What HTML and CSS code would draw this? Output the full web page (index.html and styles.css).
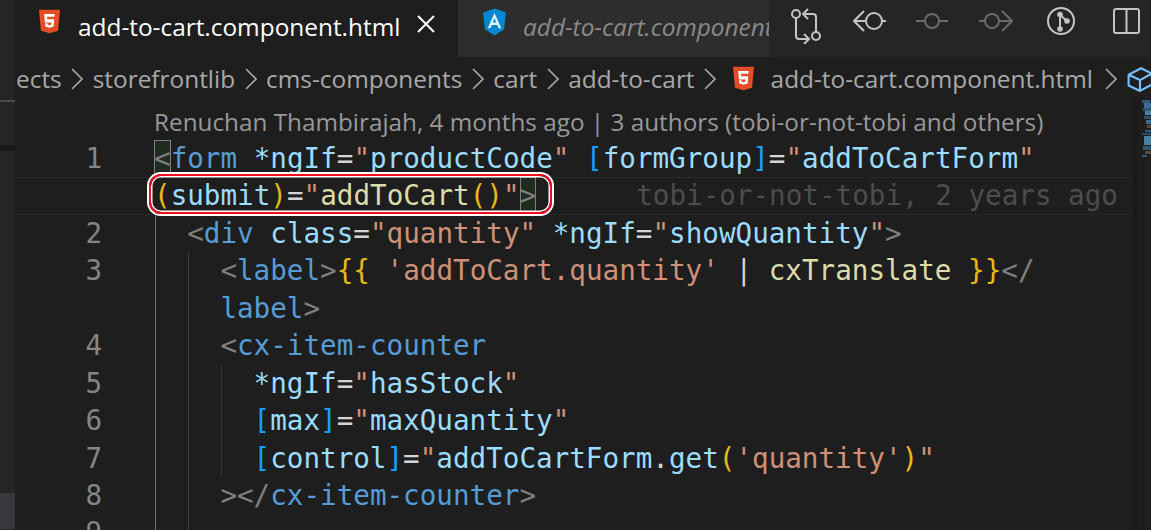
FILE: index.html
```html
<!DOCTYPE html>
<html lang="en">
<head>
<meta charset="utf-8">
<title>add-to-cart.component.html</title>
<link rel="stylesheet" href="styles.css">
</head>
<body>
<div class="app">
  <aside class="strip">
    <div class="strip-line"></div>
    <div class="strip-dark"></div>
    <div class="strip-sel"></div>
  </aside>
  <main class="main">
    <header class="tabbar">
      <div class="tab tab-active">
        <svg class="ico-html" viewBox="0 0 24 27"><path fill="#e44d26" d="M0 0h24l-2.2 24L12 27l-9.8-3z"/><path fill="#fff" d="M6 5h12l-.3 3H9.2l.2 3h8l-.7 8.200L12 20.600l-4.700-1.400-.3-3.700h2.800l.2 1.800 2 .5 2-.5.300-2.700H6.700z"/></svg>
        <span class="tab-name">add-to-cart.component.html</span>
        <svg class="ico-close" viewBox="0 0 20 20"><path d="M2 2l16 16M18 2L2 18"/></svg>
      </div>
      <div class="tab tab-inactive">
        <svg class="ico-ng" viewBox="0 0 24 28"><path fill="#0288d1" d="M12 0l12 4.200-2 17.300L12 28 2 21.500 0 4.200z"/><path fill="#e6f3fa" d="M12 4.500L5 20.500h2.700l1.400-3.500h5.800l1.400 3.500H19zM10.100 14.600L12 10l1.900 4.600z"/></svg>
        <span class="tab-name-inactive">add-to-cart.component.html</span>
      </div>
      <div class="actions">
        <svg class="ico-compare" viewBox="0 0 32 36"><g class="st"><circle cx="6" cy="6" r="4"/><circle cx="26" cy="28" r="4"/><path d="M6 10v18q0 3 3 3h9"/><path d="M14 26l5 5-5 5"/><path d="M26 24V9q0-3-3-3h-8"/><path d="M18 1l-5 5 5 5"/></g></svg>
        <svg class="ico-prev" viewBox="0 0 34 24"><g class="st"><circle cx="21" cy="12" r="8"/><path d="M13 12H2M11 2L1 12l10 10M29 12h4"/></g></svg>
        <svg class="ico-mid" viewBox="0 0 32 24"><g class="st dim"><circle cx="16" cy="12" r="7"/><path d="M0 12h9M23 12h9"/></g></svg>
        <svg class="ico-next" viewBox="0 0 34 24"><g class="st dim"><circle cx="13" cy="12" r="7"/><path d="M0 12h6M20 12h13M23 2l10 10-10 10"/></g></svg>
        <svg class="ico-branch" viewBox="0 0 28 28"><g class="st"><circle cx="14" cy="14" r="13"/><path d="M13 8v15M13 8l7 6"/></g><circle class="dot" cx="13" cy="7.500" r="2.800"/><circle class="dot" cx="20" cy="14" r="2.800"/><circle class="dot" cx="13" cy="22" r="2.800"/></svg>
        <svg class="ico-split" viewBox="0 0 27 26"><rect class="st" x="1" y="1" width="25" height="24" rx="2"/><path class="st" d="M13.500 1v24"/></svg>
      </div>
    </header>
    <nav class="crumbs">
      <span class="crumb crumb-first">ects</span>
      <svg class="chev" viewBox="0 0 12 22"><path d="M1 1l10 10L1 21"/></svg>
      <span class="crumb">storefrontlib</span>
      <svg class="chev" viewBox="0 0 12 22"><path d="M1 1l10 10L1 21"/></svg>
      <span class="crumb">cms-components</span>
      <svg class="chev" viewBox="0 0 12 22"><path d="M1 1l10 10L1 21"/></svg>
      <span class="crumb">cart</span>
      <svg class="chev" viewBox="0 0 12 22"><path d="M1 1l10 10L1 21"/></svg>
      <span class="crumb">add-to-cart</span>
      <svg class="chev" viewBox="0 0 12 22"><path d="M1 1l10 10L1 21"/></svg>
      <svg class="ico-html-small" viewBox="0 0 24 27"><path fill="#e44d26" d="M0 0h24l-2.200 24L12 27l-9.800-3z"/><path fill="#fff" d="M6 5h12l-.3 3H9.200l.2 3h8l-.7 8.200L12 20.600l-4.700-1.400-.3-3.700h2.800l.2 1.800 2 .5 2-.5.3-2.700H6.700z"/></svg>
      <span class="crumb crumb-file">add-to-cart.component.html</span>
      <svg class="chev" viewBox="0 0 12 22"><path d="M1 1l10 10L1 21"/></svg>
      <svg class="ico-cube" viewBox="0 0 24 24"><path d="M1.500 8L13 2l10 5v10l-11 6-10.500-5zM1.500 8l10.500 5 11-6M12 13v10"/></svg>
    </nav>
    <section class="editor">
      <div class="code">
        <div class="lens"><span class="lens-text">Renuchan Thambirajah, 4 months ago | 3 authors (tobi-or-not-tobi and others)</span></div>

        <div class="line"><span class="ln">1</span><span class="tx"><span class="pair"><span class="p">&lt;</span></span><span class="t">form</span> <span class="a">*ngIf</span><span class="e">=</span><span class="s">"</span><span class="a">productCode</span><span class="s">"</span> <span class="b">[</span><span class="a">formGroup</span><span class="b">]</span><span class="e">=</span><span class="s">"</span><span class="a">addToCartForm</span><span class="s">"</span></span></div>

        <div class="line line-current"><span class="ln"></span><span class="tx tx-flag"><span class="g">(</span><span class="a">submit</span><span class="g">)</span><span class="e">=</span><span class="s">"</span><span class="f">addToCart</span><span class="g">()</span><span class="s">"</span><span class="pair"><span class="p">&gt;</span></span><span class="blame">tobi-or-not-tobi, 2 years ago</span></span></div>

        <div class="line"><span class="ln">2</span><i class="guide guide-a"></i><span class="tx"><span class="p">&lt;</span><span class="t">div</span> <span class="a">class</span><span class="e">=</span><span class="s">"quantity"</span> <span class="a">*ngIf</span><span class="e">=</span><span class="s">"</span><span class="a">showQuantity</span><span class="s">"</span><span class="p">&gt;</span></span></div>

        <div class="line"><span class="ln">3</span><i class="guide guide-a"></i><i class="guide"></i><span class="tx"><span class="p">&lt;</span><span class="t">label</span><span class="p">&gt;</span><span class="g">{{</span> <span class="s">'addToCart.quantity'</span> <span class="e">|</span> <span class="f">cxTranslate</span> <span class="g">}}</span><span class="p">&lt;/</span></span></div>

        <div class="line"><span class="ln"></span><i class="guide guide-a"></i><i class="guide"></i><span class="tx"><span class="t">label</span><span class="p">&gt;</span></span></div>

        <div class="line"><span class="ln">4</span><i class="guide guide-a"></i><i class="guide"></i><span class="tx"><span class="p">&lt;</span><span class="t">cx-item-counter</span></span></div>

        <div class="line"><span class="ln">5</span><i class="guide guide-a"></i><i class="guide"></i><i class="guide guide-c"></i><span class="tx"><span class="a">*ngIf</span><span class="e">=</span><span class="s">"</span><span class="a">hasStock</span><span class="s">"</span></span></div>

        <div class="line"><span class="ln">6</span><i class="guide guide-a"></i><i class="guide"></i><i class="guide guide-c"></i><span class="tx"><span class="b">[</span><span class="a">max</span><span class="b">]</span><span class="e">=</span><span class="s">"</span><span class="a">maxQuantity</span><span class="s">"</span></span></div>

        <div class="line"><span class="ln">7</span><i class="guide guide-a"></i><i class="guide"></i><i class="guide guide-c"></i><span class="tx"><span class="b">[</span><span class="a">control</span><span class="b">]</span><span class="e">=</span><span class="s">"</span><span class="a">addToCartForm</span><span class="e">.</span><span class="a">get</span><span class="g">(</span><span class="s">'quantity'</span><span class="g">)</span><span class="s">"</span></span></div>

        <div class="line"><span class="ln">8</span><i class="guide guide-a"></i><i class="guide"></i><span class="tx"><span class="p">&gt;&lt;/</span><span class="t">cx-item-counter</span><span class="p">&gt;</span></span></div>

        <div class="line"><span class="ln">9</span><i class="guide guide-a"></i><i class="guide"></i><span class="tx"></span></div>
      </div>
      <div class="minimap">
        <svg class="mini-svg" viewBox="0 0 9 62">
          <rect x="0" y="0" width="8" height="3" fill="#2f5a7a"/><rect x="2" y="3" width="7" height="5" fill="#3d6d90"/><rect x="1" y="8" width="8" height="3" fill="#34566e"/><rect x="3" y="11" width="6" height="4" fill="#4d7f9f"/><rect x="2" y="16" width="7" height="3" fill="#2d4f68"/><rect x="4" y="20" width="5" height="4" fill="#3c6a8c"/><rect x="5" y="25" width="4" height="3" fill="#54473f"/><rect x="3" y="30" width="6" height="2" fill="#2f5a7a"/><rect x="0" y="33" width="9" height="2" fill="#2d4f68"/><rect x="2" y="36" width="7" height="9" fill="#4d7f9f"/><rect x="1" y="46" width="8" height="4" fill="#34566e"/><rect x="3" y="51" width="6" height="3" fill="#5a4a40"/><rect x="0" y="55" width="5" height="2" fill="#2f5a7a"/>
        </svg>
      </div>
    </section>
  </main>
</div>
</body>
</html>
```

FILE: styles.css
```css
* { box-sizing: border-box; }
html, body { margin: 0; padding: 0; height: 100%; background: #1e1e1e; overflow: hidden; }

.app { display: flex; width: 1151px; height: 530px; overflow: hidden; }

/* left edge */
.strip { flex: 0 0 15px; display: flex; flex-direction: column; background: #252526; }
.strip-line { height: 2px; margin-top: 100px; background: #4a4a4a; }
.strip-dark { height: 6px; margin-top: 43px; background: #1a1a1a; }
.strip-sel { height: 36px; margin-top: 342px; background: #37373d; }

.main { flex: 1; min-width: 0; display: flex; flex-direction: column; }

/* tabs */
.tabbar { flex: 0 0 57px; display: flex; background: #252526; font-family: "Open Sans", "Noto Sans", sans-serif; }
.tab { display: flex; align-items: flex-start; overflow: hidden; }
.tab-active { flex: 0 0 443px; background: #1e1e1e; color: #fff; padding: 8px 0 0 24px; }
.tab-inactive { flex: 0 0 311px; background: #2d2d2d; padding: 8px 0 0 25px; }
.ico-html { flex: none; width: 21px; height: 27px; }
.tab-name { margin: 1px 0 0 18px; font-size: 24.4px; line-height: 36px; white-space: nowrap; }
.ico-close { flex: none; width: 20px; height: 20px; margin: 6px 0 0 16px; fill: none; stroke: #fff; stroke-width: 2; }
.ico-ng { flex: none; width: 23px; height: 28px; }
.tab-name-inactive { margin: 1px 0 0 17px; font-size: 24.4px; line-height: 36px; white-space: nowrap; font-style: italic; color: #8a8a8a; }

.actions { flex: 1; display: flex; align-items: flex-start; padding: 8px 0 0 21px; }
.st { fill: none; stroke: #c5c5c5; stroke-width: 2; }
.st.dim { stroke: #6a6a6a; }
.dot { fill: #c5c5c5; }
.ico-compare { flex: none; width: 32px; height: 36px; }
.ico-prev { flex: none; width: 34px; height: 24px; margin: 1px 0 0 31px; }
.ico-mid { flex: none; width: 32px; height: 24px; margin: 1px 0 0 29px; }
.ico-next { flex: none; width: 34px; height: 24px; margin: 1px 0 0 31px; }
.ico-branch { flex: none; width: 28px; height: 28px; margin: -1px 0 0 34px; }
.ico-split { flex: none; width: 27px; height: 26px; margin: 0 0 0 38px; }

/* breadcrumbs */
.crumbs { flex: 0 0 43px; display: flex; align-items: center; background: #1e1e1e; color: #a9a9a9; font-family: "Open Sans", "Noto Sans", sans-serif; font-size: 24.4px; white-space: nowrap; overflow: hidden; }
.crumb-first { margin-left: 1px; }
.chev { flex: none; width: 12px; height: 22px; margin: 0 9.5px; fill: none; stroke: #a9a9a9; stroke-width: 1.6; }
.ico-html-small { flex: none; width: 21px; height: 25px; margin-left: 7px; }
.crumb-file { margin: 0 3px 0 17px; }
.ico-cube { flex: none; width: 26px; height: 26px; fill: none; stroke: #75beff; stroke-width: 2; stroke-linejoin: round; }

/* editor */
.editor { flex: 1; min-height: 0; display: flex; overflow: hidden; }
.code { flex: 0 0 1118px; overflow: hidden; font-family: "DejaVu Sans Mono", monospace; font-size: 27.6px; color: #d4d4d4; }
.lens { height: 40px; padding: 7px 0 0 139px; font-family: "Open Sans", "Noto Sans", sans-serif; font-size: 24.3px; line-height: 30px; color: #999; white-space: nowrap; }
.line { display: flex; height: 37.45px; line-height: 37.45px; white-space: pre; }
.ln { flex: 0 0 140px; width: 140px; padding-right: 53px; text-align: right; color: #858585; }
.tx { position: relative; display: block; flex: none; margin-left: -1px; }
.guide { flex: 0 0 33.2px; box-shadow: inset 1px 0 #404040; }
.guide-a { box-shadow: inset 1px 0 #707070; }
.guide-c { box-shadow: inset 1px 0 #353535; }

.line-current { box-shadow: inset 0 1px #282828, inset 0 -1px #282828; }
.tx-flag::after { content: ""; position: absolute; left: -5px; top: -3px; width: 399px; height: 36px; border: 2px solid #f00d1e; border-radius: 12px; box-shadow: 0 0 0 2px #fff, inset 0 0 0 1.5px #fff; }

.pair { display: inline-block; height: 37px; vertical-align: top; background: #1f2c1f; box-shadow: inset 0 0 0 1px #808080; }
.p { color: #808080; }
.t { color: #569cd6; }
.a { color: #9cdcfe; }
.e { color: #d4d4d4; }
.s { color: #ce9178; }
.b { color: #179fff; }
.g { color: #e8b91a; }
.f { color: #dcdcaa; }
.blame { margin-left: 100px; color: #4d4d4d; }

/* minimap */
.minimap { flex: 1; background: #1e1e1e; box-shadow: inset 4px 0 4px -2px #161616; display: flex; justify-content: flex-end; align-items: flex-start; }
.mini-svg { width: 9px; height: 62px; }
```
